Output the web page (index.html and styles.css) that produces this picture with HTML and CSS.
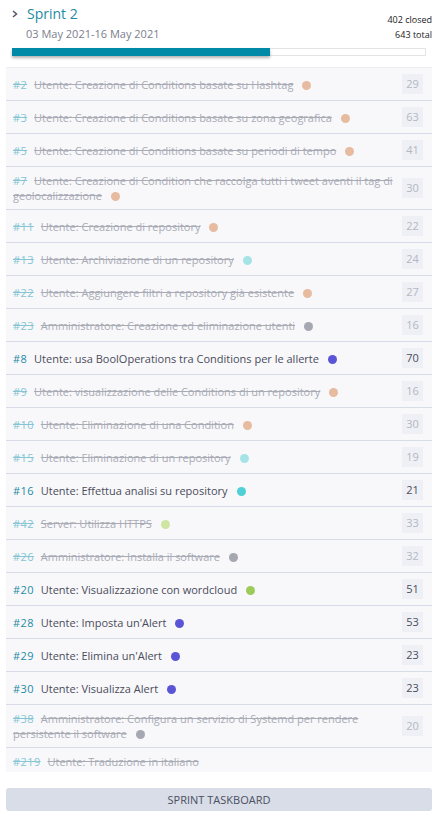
FILE: index.html
```html
<!DOCTYPE html>
<html lang="it">
<head>
<meta charset="utf-8">
<title>Sprint 2</title>
<link rel="stylesheet" href="styles.css">
</head>
<body>
<div class="sprint">
  <div class="sprint-header">
    <div class="sprint-info">
      <div class="sprint-title">
        <svg class="chevron" width="6" height="8" viewBox="0 0 6 8"><path d="M1 1 L4.5 4 L1 7" fill="none" stroke="#555b6b" stroke-width="1.6"/></svg>
        <span class="sprint-name">Sprint 2</span>
      </div>
      <div class="sprint-date">03 May 2021-16 May 2021</div>
    </div>
    <div class="sprint-stats">
      <div>402 closed</div>
      <div>643 total</div>
    </div>
  </div>
  <div class="progress"><div class="progress-fill" style="width:62.5%"></div></div>

  <div class="story-list">
    <div class="story closed"><p class="story-text"><span class="ref">#2</span> <span class="subject">Utente: Creazione di Conditions basate su Hashtag</span><span class="dot peach"></span></p><span class="points">29</span></div>
    <div class="story closed"><p class="story-text"><span class="ref">#3</span> <span class="subject">Utente: Creazione di Conditions basate su zona geografica</span><span class="dot peach"></span></p><span class="points">63</span></div>
    <div class="story closed"><p class="story-text"><span class="ref">#5</span> <span class="subject">Utente: Creazione di Conditions basate su periodi di tempo</span><span class="dot peach"></span></p><span class="points">41</span></div>
    <div class="story closed"><p class="story-text"><span class="ref">#7</span> <span class="subject">Utente: Creazione di Condition che raccolga tutti i tweet aventi il tag di geolocalizzazione</span><span class="dot peach"></span></p><span class="points">30</span></div>
    <div class="story closed"><p class="story-text"><span class="ref">#11</span> <span class="subject">Utente: Creazione di repository</span><span class="dot peach"></span></p><span class="points">22</span></div>
    <div class="story closed"><p class="story-text"><span class="ref">#13</span> <span class="subject">Utente: Archiviazione di un repository</span><span class="dot cyan"></span></p><span class="points">24</span></div>
    <div class="story closed"><p class="story-text"><span class="ref">#22</span> <span class="subject">Utente: Aggiungere filtri a repository già esistente</span><span class="dot peach"></span></p><span class="points">27</span></div>
    <div class="story closed"><p class="story-text"><span class="ref">#23</span> <span class="subject">Amministratore: Creazione ed eliminazione utenti</span><span class="dot gray"></span></p><span class="points">16</span></div>
    <div class="story"><p class="story-text"><span class="ref">#8</span> <span class="subject">Utente: usa BoolOperations tra Conditions per le allerte</span><span class="dot purple"></span></p><span class="points">70</span></div>
    <div class="story closed"><p class="story-text"><span class="ref">#9</span> <span class="subject">Utente: visualizzazione delle Conditions di un repository</span><span class="dot peach"></span></p><span class="points">16</span></div>
    <div class="story closed"><p class="story-text"><span class="ref">#10</span> <span class="subject">Utente: Eliminazione di una Condition</span><span class="dot peach"></span></p><span class="points">30</span></div>
    <div class="story closed"><p class="story-text"><span class="ref">#15</span> <span class="subject">Utente: Eliminazione di un repository</span><span class="dot cyan"></span></p><span class="points">19</span></div>
    <div class="story"><p class="story-text"><span class="ref">#16</span> <span class="subject">Utente: Effettua analisi su repository</span><span class="dot cyan-strong"></span></p><span class="points">21</span></div>
    <div class="story closed"><p class="story-text"><span class="ref">#42</span> <span class="subject">Server: Utilizza HTTPS</span><span class="dot green"></span></p><span class="points">33</span></div>
    <div class="story closed"><p class="story-text"><span class="ref">#26</span> <span class="subject">Amministratore: Installa il software</span><span class="dot gray"></span></p><span class="points">32</span></div>
    <div class="story"><p class="story-text"><span class="ref">#20</span> <span class="subject">Utente: Visualizzazione con wordcloud</span><span class="dot green-strong"></span></p><span class="points">51</span></div>
    <div class="story"><p class="story-text"><span class="ref">#28</span> <span class="subject">Utente: Imposta un'Alert</span><span class="dot purple"></span></p><span class="points">53</span></div>
    <div class="story"><p class="story-text"><span class="ref">#29</span> <span class="subject">Utente: Elimina un'Alert</span><span class="dot purple"></span></p><span class="points">23</span></div>
    <div class="story"><p class="story-text"><span class="ref">#30</span> <span class="subject">Utente: Visualizza Alert</span><span class="dot purple"></span></p><span class="points">23</span></div>
    <div class="story closed"><p class="story-text"><span class="ref">#38</span> <span class="subject">Amministratore: Configura un servizio di Systemd per rendere persistente il software</span><span class="dot gray"></span></p><span class="points">20</span></div>
    <div class="story closed"><p class="story-text"><span class="ref">#219</span> <span class="subject">Utente: Traduzione in italiano</span></p></div>
  </div>

  <div class="taskboard-btn">SPRINT TASKBOARD</div>
</div>
</body>
</html>
```

FILE: styles.css
```css
* { box-sizing: border-box; }
html, body { margin: 0; padding: 0; background: #ffffff; }
body {
  font-family: "Open Sans", "Noto Sans", sans-serif;
  color: #4a4c5a;
  width: 443px;
  height: 818px;
  overflow: hidden;
}
.sprint { padding: 0 11px 0 6px; }

.sprint-header {
  display: flex;
  justify-content: space-between;
  align-items: flex-start;
  padding: 3px 0 0 6px;
  height: 46px;
}
.sprint-title { display: flex; align-items: center; gap: 9px; height: 22px; }
.chevron { display: block; margin-top: -1px; }
.sprint-name { font-size: 14px; color: #1e8ba3; line-height: 22px; }
.sprint-date { font-size: 11px; color: #7a7e8c; margin-left: 14px; line-height: 18px; }
.sprint-stats {
  text-align: right;
  font-size: 9px;
  line-height: 15px;
  color: #222;
  padding-top: 9px;
}

.progress {
  margin: 2px 6px 0 6px;
  height: 8px;
  background: #fff;
  border: 1px solid #e4e4e4;
  border-left: none;
}
.progress-fill {
  height: 8px;
  margin-top: -1px;
  background: #008aa8;
  box-shadow: 0 2px 3px rgba(0,0,0,0.3);
}

.story-list {
  margin-top: 11px;
  height: 705px;
  overflow: hidden;
  background: #f8f8fb;
  border-top: 1px solid #eceef3;
}
.story {
  display: flex;
  align-items: center;
  padding: 6px 9px 6px 7px;
  border-bottom: 1px solid #d8dce8;
}
.story-text {
  flex: 1;
  margin: 0;
  font-size: 11px;
  line-height: 15px;
  padding-right: 8px;
}
.ref { color: #1e8ba3; margin-right: 4px; letter-spacing: 0.4px; }
.subject { color: #4a4c5a; }
.closed .ref { color: #86c6d4; text-decoration: line-through; }
.closed .subject { color: #a9abb5; text-decoration: line-through; }
.dot {
  display: inline-block;
  width: 9px;
  height: 9px;
  border-radius: 50%;
  margin-left: 9px;
  vertical-align: -1px;
}
.peach { background: #e6bb9f; }
.cyan { background: #a6e3e6; }
.cyan-strong { background: #4fcfd6; }
.gray { background: #a5a7b1; }
.purple { background: #5a55d7; }
.green { background: #cfe6a3; }
.green-strong { background: #9ccb5c; }

.points {
  flex: none;
  width: 21px;
  height: 20px;
  background: #eef0f5;
  font-size: 11px;
  line-height: 20px;
  text-align: center;
  color: #4a4c5a;
}
.closed .points { color: #b4b7c2; }

.taskboard-btn {
  margin-top: 16px;
  height: 23px;
  background: #d8dde8;
  border-radius: 3px;
  text-align: center;
  font-size: 11px;
  line-height: 23px;
  color: #4b4f5e;
}
```
